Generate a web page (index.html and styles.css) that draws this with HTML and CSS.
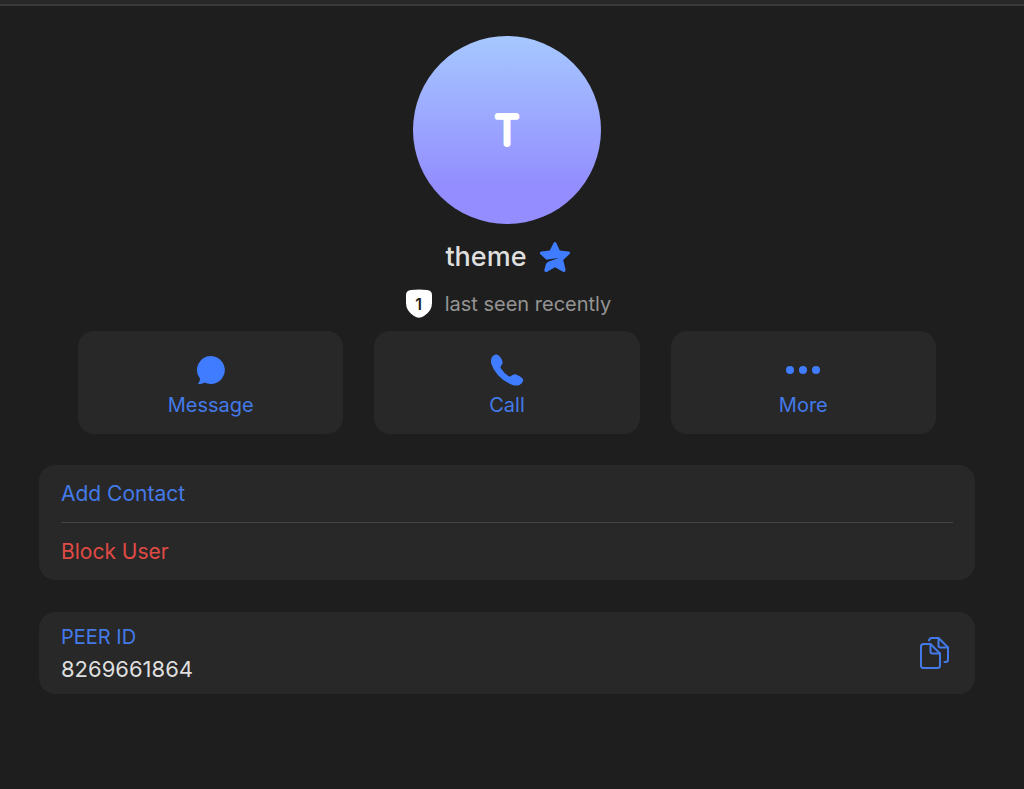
FILE: index.html
```html
<!DOCTYPE html>
<html lang="en">
<head>
  <meta charset="UTF-8"/>
  <meta name="viewport" content="width=device-width, initial-scale=1.0"/>
  <title>theme</title>
  <link rel="stylesheet" href="styles.css">
</head>
<body>

  <div class="topbar"></div>

  <main class="container">

    <!-- PROFILE -->
    <section class="profile">
      <div class="avatar">
        <svg class="avatar-letter" viewBox="0 0 60 60" aria-hidden="true">
          <text x="30" y="44" text-anchor="middle">T</text>
        </svg>
      </div>

      <h1 class="name">
        theme
        <svg class="star" viewBox="0 0 32 32" aria-hidden="true">
          <path d="M14.4 2.2 Q16 -0.4 17.5 2.2 L20.8 9.6 L29.6 10.4 Q32.2 11.2 30.4 13.2 L24.2 19 L26.6 28.8 Q26.6 31.6 24 30.8 L16 26.2 L8.2 30.8 Q5.2 31.6 5.4 28.8 L7 22.8 Q8.4 20.6 13 19.2 L20 17.2 Q13.6 17.4 7.4 18.8 L1.4 13.2 Q-0.2 11 2.4 10.4 L10.8 9.6 Z"/>
        </svg>
      </h1>

      <div class="status">
        <span class="level">
          <svg viewBox="0 0 28 30" aria-hidden="true">
            <path d="M6 1 Q14 0 22 1 Q27 1.4 27 6 V14 Q27 22 19 27 Q14 30.5 9 27 Q1 22 1 14 V6 Q1 1.4 6 1 Z"/>
          </svg>
          <span class="level-number">1</span>
        </span>
        <span>last seen recently</span>
      </div>
    </section>

    <!-- ACTIONS -->
    <div class="actions">
      <button type="button" class="action">
        <svg viewBox="0 0 36 36" aria-hidden="true">
          <path d="M18 4 A14 14 0 1 1 11.5 30.5 Q8.5 32.4 5.6 32 Q4.7 31.6 5.4 31 Q7.3 29 6.9 26.5 A14 14 0 0 1 18 4 Z"/>
        </svg>
        Message
      </button>
      <button type="button" class="action">
        <svg viewBox="0 0 36 36" aria-hidden="true">
          <path d="M3.2 4.8 Q6.8 0.8 10.2 4 Q13.8 8 13.6 11 Q13.4 12.6 11.8 14 Q11.2 15 12 16.4 Q14.8 20.8 19.4 24 Q20.8 24.9 22 23.9 Q24.4 21.6 27.2 22.4 Q31 23.6 33.6 26.6 Q35 28.8 32.6 31.4 Q29 34.8 23.5 33 Q15.6 30.3 8.8 22.9 Q3.8 17.2 2.2 11.4 Q1.4 7.4 3.2 4.8 Z"/>
        </svg>
        Call
      </button>
      <button type="button" class="action">
        <svg viewBox="0 0 36 36" aria-hidden="true">
          <circle cx="5" cy="18" r="4"/>
          <circle cx="18" cy="18" r="4"/>
          <circle cx="31" cy="18" r="4"/>
        </svg>
        More
      </button>
    </div>

    <!-- CONTACT -->
    <section class="card">
      <button type="button" class="row">Add Contact</button>
      <button type="button" class="row danger">Block User</button>
    </section>

    <!-- PEER ID -->
    <section class="card peer">
      <dl>
        <dt>PEER ID</dt>
        <dd>8269661864</dd>
      </dl>
      <button type="button" class="copy" aria-label="Copy">
        <svg viewBox="0 0 32 34" aria-hidden="true">
          <path d="M4.5 8 H11.5 L21 17.5 V29.5 Q21 32 18.5 32 H4.5 Q2 32 2 29.5 V10.5 Q2 8 4.5 8 Z"/>
          <path d="M11.5 8 V15.5 Q11.5 17.5 13.5 17.5 H21"/>
          <path d="M10 4.5 Q10.4 2 13 2 H19.5 L29 11.5 V23.5 Q29 26 26.5 26 H25.5"/>
          <path d="M19.5 2 V9.5 Q19.5 11.5 21.5 11.5 H29"/>
        </svg>
      </button>
    </section>

  </main>

</body>
</html>
```

FILE: styles.css
```css
* {
  margin: 0;
  padding: 0;
  box-sizing: border-box;
}

body {
  font-family: Inter, sans-serif;
  font-size: 20px;
  background: #1e1e1e;
  color: #dfdfdf;
}

button {
  font: inherit;
  color: #437ae8;
  background: none;
  border: none;
  cursor: pointer;
}

.topbar {
  height: 6px;
  background: #282828;
  border-bottom: 2px solid #3a3a3a;
}

.container {
  padding: 30px 49px 32px 39px;
}

.profile {
  display: flex;
  flex-direction: column;
  align-items: center;
}

.avatar {
  width: 188px;
  height: 188px;
  border-radius: 50%;
  background: linear-gradient(#a6c8ff, #938dff 80%);
  display: flex;
  align-items: center;
  justify-content: center;
}

.avatar-letter {
  width: 60px;
  height: 60px;
  fill: #fff;
  stroke: #fff;
  stroke-width: 6px;
  stroke-linejoin: round;
  font-size: 38px;
  font-weight: 100;
}

.name {
  display: flex;
  align-items: center;
  gap: 12px;
  margin-top: 15px;
  padding-left: 2px;
  font-size: 27px;
  line-height: 36px;
  font-weight: 500;
}

.star {
  width: 32px;
  height: 32px;
  fill: #3f7cff;
}

.status {
  display: flex;
  align-items: center;
  gap: 12px;
  margin-top: 13px;
  padding-left: 2px;
  line-height: 32px;
  color: #949494;
}

.level {
  display: grid;
  place-items: center;
}

.level > * {
  grid-area: 1 / 1;
}

.level svg {
  width: 28px;
  height: 30px;
  fill: #fff;
}

.level-number {
  font-size: 16px;
  font-weight: 600;
  color: #1e1e1e;
}

.actions {
  display: grid;
  grid-template-columns: repeat(3, 1fr);
  gap: 31px;
  margin: 11px 39px 31px;
}

.action {
  display: flex;
  flex-direction: column;
  align-items: center;
  gap: 2px;
  padding: 21px 16px 14px;
  line-height: 30px;
  background: #282828;
  border-radius: 16px;
}

.action svg {
  width: 36px;
  height: 36px;
  fill: #3f7cff;
}

.card {
  padding: 0 22px;
  background: #282828;
  border-radius: 16px;
}

.card + .card {
  margin-top: 32px;
}

.row {
  display: block;
  width: 100%;
  text-align: left;
  font-size: 21px;
  line-height: 57px;
}

.row + .row {
  border-top: 1px solid #444;
}

.danger {
  color: #e04a44;
}

.peer {
  display: flex;
  align-items: center;
  justify-content: space-between;
  padding: 9px 24px 9px 22px;
}

.peer dt {
  line-height: 32px;
  color: #437ae8;
}

.peer dd {
  font-size: 22px;
  line-height: 32px;
}

.copy svg {
  display: block;
  width: 32px;
  height: 34px;
  fill: none;
  stroke: #437ae8;
  stroke-width: 2px;
  stroke-linejoin: round;
  stroke-linecap: round;
}
```
